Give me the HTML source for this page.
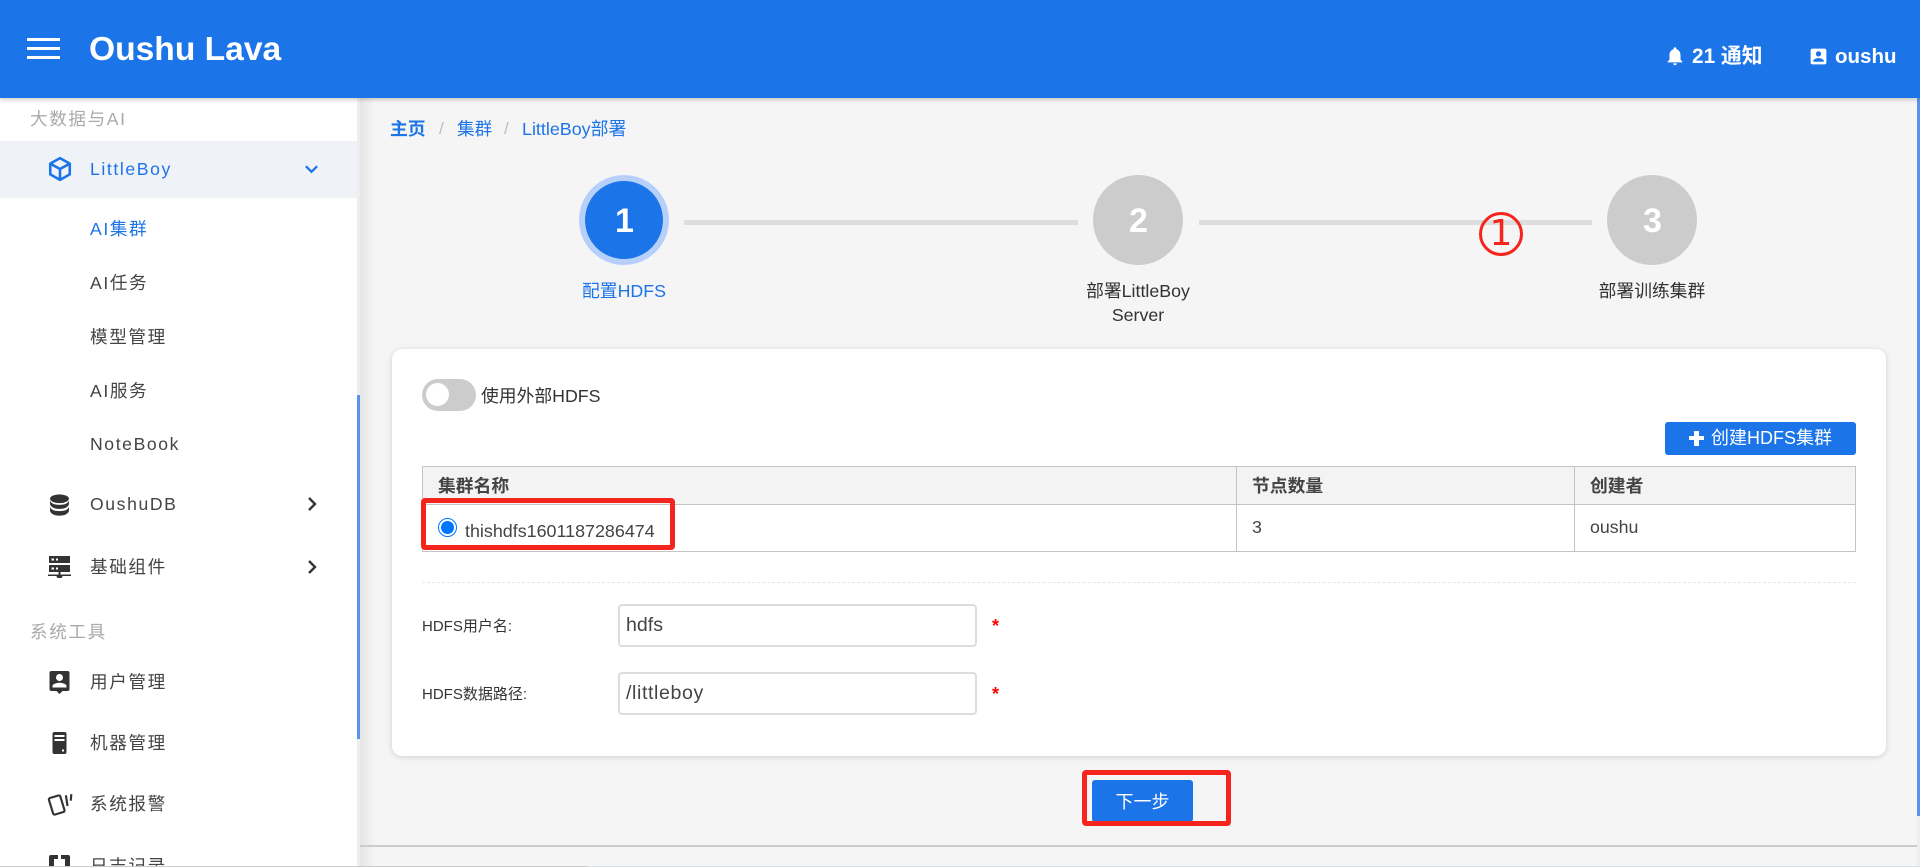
<!DOCTYPE html>
<html><head><meta charset="utf-8"><title>Oushu Lava</title>
<style>
html,body{margin:0;padding:0;width:1920px;height:867px;overflow:hidden;background:#f5f5f5}
body{font-family:"Liberation Sans","Noto Sans CJK SC",sans-serif;color:#333;position:relative}
div,span,svg{position:absolute;box-sizing:border-box}
.t{line-height:24px;white-space:nowrap;height:24px}
.nav{font-size:17.6px;letter-spacing:1.6px;color:#444;left:90px}
.sec{font-size:17.6px;letter-spacing:1.6px;color:#aaa;left:30px}
.stp{font-size:17.8px;color:#333;text-align:center;width:200px}
.c{border-radius:50%;width:90px;height:90px;top:175px;background:#ccc;color:#fff;font-weight:bold;font-size:34px;line-height:92px;text-align:center;padding-left:1px}
.ln{top:220px;height:5px;background:#ddd}
.th{font-size:17.8px;font-weight:bold;color:#444}
.td{font-size:17.8px;color:#444}
.lb{font-size:15px;color:#333;left:422px}
.in{left:618px;width:359px;height:43px;border:2px solid #ddd;border-radius:4px;background:#fff;font-size:19.6px;line-height:39px;padding-left:6px;color:#444}
.ast{color:#f00;font-size:18px;font-weight:bold}
.red{border:5px solid #f5241c;border-radius:4px}
.g{fill:#333}
</style></head><body>

<!-- main shadow -->
<div style="left:360px;top:98px;width:16px;height:769px;background:linear-gradient(90deg,#e6e6e6,#f5f5f5)"></div>

<!-- header -->
<div style="left:0;top:0;width:1920px;height:98px;background:#1b74e8;box-shadow:0 2px 4px rgba(0,0,0,.18);z-index:5">
  <div style="left:27px;top:38px;width:33px;height:3px;background:#fff"></div>
  <div style="left:27px;top:47px;width:33px;height:3px;background:#fff"></div>
  <div style="left:27px;top:56px;width:33px;height:3px;background:#fff"></div>
  <div class="t" style="left:89px;top:30px;height:40px;line-height:40px;font-size:33.6px;font-weight:bold;color:#fff">Oushu Lava</div>
  <svg style="left:1664px;top:45px" width="22" height="22" viewBox="0 0 24 24"><path fill="#fff" d="M12 22c1.1 0 2-.9 2-2h-4c0 1.1.9 2 2 2zm6-6v-5c0-3.07-1.63-5.64-4.5-6.32V4c0-.83-.67-1.5-1.5-1.5s-1.5.67-1.5 1.5v.68C7.64 5.36 6 7.92 6 11v5l-2 2v1h16v-1l-2-2z"/></svg>
  <div class="t" style="left:1692px;top:45px;font-size:20.8px;font-weight:bold;color:#fff">21 通知</div>
  <svg style="left:1808px;top:46px" width="21" height="21" viewBox="0 0 24 24"><path fill="#fff" d="M3 5v14c0 1.1.89 2 2 2h14c1.1 0 2-.9 2-2V5c0-1.1-.9-2-2-2H5c-1.11 0-2 .9-2 2zm12 4c0 1.66-1.34 3-3 3s-3-1.34-3-3 1.34-3 3-3 3 1.34 3 3zm-9 8c0-2 4-3.1 6-3.1s6 1.1 6 3.1v1H6v-1z"/></svg>
  <div class="t" style="left:1835px;top:45px;font-size:20.5px;font-weight:bold;color:#fff">oushu</div>
</div>

<!-- sidebar -->
<div style="left:0;top:98px;width:357px;height:769px;background:#fff"></div>
<div style="left:357px;top:98px;width:3px;height:769px;background:#eee"></div>
<div style="left:357px;top:395px;width:3px;height:344px;background:#5a94ee"></div>
<div style="left:0;top:141px;width:357px;height:57px;background:#eff2f6"></div>

<div class="t sec" style="top:107px">大数据与AI</div>
<svg style="left:47px;top:156px" width="26" height="26" viewBox="0 0 24 24" fill="none" stroke="#1b74e8" stroke-width="2.400" stroke-linejoin="round"><path d="M12 2 21 7V17L12 22 3 17V7Z"/><path d="M3 7 12 12 21 7M12 12V22"/></svg>
<div class="t nav" style="top:157px;color:#1b74e8">LittleBoy</div>
<svg style="left:304px;top:163px" width="15" height="12" viewBox="0 0 16 12" fill="none" stroke="#1b74e8" stroke-width="2.400"><path d="M2 3 8 9 14 3"/></svg>
<div class="t nav" style="top:217px;color:#1b74e8">AI集群</div>
<div class="t nav" style="top:271px">AI任务</div>
<div class="t nav" style="top:325px">模型管理</div>
<div class="t nav" style="top:379px">AI服务</div>
<div class="t nav" style="top:432px">NoteBook</div>

<svg style="left:49px;top:494px" width="21" height="22" viewBox="0 0 19 21"><ellipse class="g" cx="9.500" cy="4.500" rx="9" ry="4.200"/><path class="g" d="M.5 6.500C2 9.500 5 10.400 9.500 10.400S17 9.500 18.500 6.500V10C17 13 14 14.200 9.500 14.200S2 13 .5 10Z"/><path class="g" d="M.5 12.500C2 15.500 5 16.300 9.500 16.300S17 15.500 18.500 12.500V16.500C17 19.500 14 20.700 9.500 20.700S2 19.500 .5 16.500Z"/></svg>
<div class="t nav" style="top:492px">OushuDB</div>
<svg style="left:306px;top:497px" width="12" height="14" viewBox="0 0 12 14" fill="none" stroke="#333" stroke-width="2.400"><path d="M3 1 9 7 3 13"/></svg>

<svg style="left:48px;top:555px" width="23" height="23" viewBox="0 0 23 23"><path class="g" fill-rule="evenodd" d="M1 1H22V8H1ZM3.500 3.500V5.500H6V3.500ZM8 3.500V5.500H10V3.500ZM1 10H22V17H1ZM3.500 12.500V14.500H6V12.500ZM8 12.500V14.500H10V12.500Z"/><path class="g" d="M10.500 17H12.500V19.500H23V21H14.500A3 2.500 0 0 1 8.500 21H0V19.500H10.500Z"/></svg>
<div class="t nav" style="top:555px">基础组件</div>
<svg style="left:306px;top:560px" width="12" height="14" viewBox="0 0 12 14" fill="none" stroke="#333" stroke-width="2.400"><path d="M3 1 9 7 3 13"/></svg>

<div class="t sec" style="top:620px">系统工具</div>

<svg style="left:49px;top:670px" width="21" height="24" viewBox="0 0 21 24"><path class="g" fill-rule="evenodd" d="M2.500 1H18.500A2 2 0 0 1 20.500 3V19A2 2 0 0 1 18.500 21H13.500L10.500 24 7.500 21H2.500A2 2 0 0 1 .5 19V3A2 2 0 0 1 2.500 1ZM10.500 4A3.500 3.500 0 1 0 10.500 11 3.500 3.500 0 1 0 10.500 4ZM3.500 17.500H17.500V16C17.500 13.800 13 12.700 10.500 12.700S3.500 13.800 3.500 16Z"/></svg>
<div class="t nav" style="top:670px">用户管理</div>

<svg style="left:52px;top:731px" width="15" height="24" viewBox="0 0 15 24"><path class="g" fill-rule="evenodd" d="M2.500 1H12.500A2 2 0 0 1 14.500 3V21A2 2 0 0 1 12.500 23H2.500A2 2 0 0 1 .5 21V3A2 2 0 0 1 2.500 1ZM2.500 4V6H12.500V4ZM2.500 8V10H12.500V8ZM10 18.500V20.500H12V18.500Z"/></svg>
<div class="t nav" style="top:731px">机器管理</div>

<svg style="left:47px;top:793px" width="27" height="24" viewBox="0 0 25 22" fill="none" stroke="#333" stroke-width="2"><rect x="3.500" y="3" width="11" height="16" rx="1.500" transform="rotate(-17 9 11)"/><path d="M17.500 2 19 12M22.500 1 22 7"/></svg>
<div class="t nav" style="top:792px">系统报警</div>

<svg style="left:49px;top:855px" width="21" height="12" viewBox="0 0 21 12"><path class="g" d="M2 0H9V4L5 4V12H0V2A2 2 0 0 1 2 0ZM19 0H12V4L16 4V12H21V2A2 2 0 0 0 19 0Z"/></svg>
<div class="t nav" style="top:854px;height:12px;overflow:hidden">日志记录</div>

<!-- breadcrumb -->
<div class="t" style="left:390px;top:117px;font-size:17.8px;font-weight:bold;color:#1b74e8">主页</div>
<div class="t" style="left:439px;top:117px;font-size:17px;color:#bbb">/</div>
<div class="t" style="left:457px;top:117px;font-size:17.6px;color:#1b74e8">集群</div>
<div class="t" style="left:504px;top:117px;font-size:17px;color:#bbb">/</div>
<div class="t" style="left:522px;top:117px;font-size:17.9px;color:#1b74e8">LittleBoy部署</div>

<!-- steps -->
<div class="c" style="left:579px;background:#1b74e8;border:6px solid #b6d0fb;line-height:80px">1</div>
<div class="c" style="left:1093px">2</div>
<div class="c" style="left:1607px">3</div>
<div class="ln" style="left:684px;width:394px"></div>
<div class="ln" style="left:1199px;width:393px"></div>
<div class="t stp" style="left:524px;top:279px;color:#1b74e8">配置HDFS</div>
<div class="t stp" style="left:1038px;top:279px">部署LittleBoy</div>
<div class="t stp" style="left:1038px;top:303px">Server</div>
<div class="t stp" style="left:1552px;top:279px">部署训练集群</div>
<div style="left:1479px;top:212px;width:44px;height:44px;border:3px solid #f5241c;border-radius:50%;color:#f5241c;font-family:'DejaVu Sans',sans-serif;font-size:36px;line-height:37px;text-align:center;z-index:3">1</div>

<!-- card -->
<div style="left:392px;top:349px;width:1494px;height:407px;background:#fff;border-radius:10px;box-shadow:0 1px 6px rgba(0,0,0,.16)"></div>

<div style="left:422px;top:379px;width:54px;height:32px;background:#ccc;border-radius:16px"></div>
<div style="left:426px;top:383px;width:23px;height:23px;background:#fff;border-radius:50%"></div>
<div class="t" style="left:481px;top:384px;font-size:17.8px;color:#333">使用外部HDFS</div>

<div style="left:1665px;top:422px;width:191px;height:33px;background:#1b74e8;border-radius:3px"></div>
<div style="left:1689px;top:436px;width:15px;height:4px;background:#fff"></div>
<div style="left:1694px;top:431px;width:5px;height:15px;background:#fff"></div>
<div class="t" style="left:1711px;top:426px;font-size:18px;color:#fff">创建HDFS集群</div>

<!-- table -->
<div style="left:422px;top:466px;width:1434px;height:86px;border:1px solid #c4c4c4;background:#fff"></div>
<div style="left:423px;top:467px;width:1432px;height:37px;background:#f3f3f3"></div>
<div style="left:422px;top:504px;width:1434px;height:1px;background:#c4c4c4"></div>
<div style="left:1236px;top:466px;width:1px;height:86px;background:#c4c4c4"></div>
<div style="left:1574px;top:466px;width:1px;height:86px;background:#c4c4c4"></div>
<div class="t th" style="left:438px;top:474px">集群名称</div>
<div class="t th" style="left:1252px;top:474px">节点数量</div>
<div class="t th" style="left:1590px;top:474px">创建者</div>
<div style="left:438px;top:518px;width:19px;height:19px;border:1.500px solid #0075ff;border-radius:50%;background:#fff"></div>
<div style="left:441px;top:521px;width:13px;height:13px;background:#0075ff;border-radius:50%"></div>
<div class="t" style="left:465px;top:519px;font-size:17.9px;color:#444">thishdfs1601187286474</div>
<div class="t td" style="left:1252px;top:515px">3</div>
<div class="t td" style="left:1590px;top:515px">oushu</div>
<div class="red" style="left:421px;top:498px;width:254px;height:52px"></div>

<div style="left:422px;top:582px;width:1434px;height:0;border-top:1px dashed #e6e6e6"></div>

<!-- form -->
<div class="t lb" style="top:615px">HDFS用户名:</div>
<div class="in" style="top:604px">hdfs</div>
<div class="t ast" style="top:614px;left:992px">*</div>
<div class="t lb" style="top:683px">HDFS数据路径:</div>
<div class="in" style="top:672px;letter-spacing:.6px">/littleboy</div>
<div class="t ast" style="top:682px;left:992px">*</div>

<!-- next -->
<div style="left:1092px;top:780px;width:101px;height:42px;background:#1b74e8;border-radius:3px"></div>
<div class="t" style="left:1092px;top:790px;width:101px;text-align:center;font-size:18px;color:#fff">下一步</div>
<div class="red" style="left:1082px;top:770px;width:149px;height:56px"></div>

<!-- footer line -->
<div style="left:360px;top:845px;width:1557px;height:2px;background:#ccc"></div>

<!-- right scrollbar -->
<div style="left:1917px;top:98px;width:3px;height:769px;background:#eee"></div>
<div style="left:1917px;top:98px;width:3px;height:718px;background:#5a94ee"></div>

<!-- bottom strip -->
<div style="left:0;top:866px;width:588px;height:1px;background:#ccc;z-index:6"></div>
<div style="left:588px;top:866px;width:1332px;height:1px;background:#d5e3ee;z-index:6"></div>
</body></html>
